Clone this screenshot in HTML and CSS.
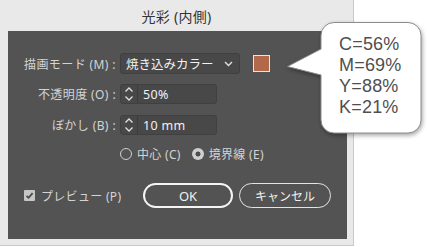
FILE: index.html
```html
<!DOCTYPE html>
<html lang="ja">
<head>
<meta charset="utf-8">
<link rel="stylesheet" href="styles.css">
</head>
<body>
<div class="window">
  <div class="titlebar">光彩 (内側)</div>
  <div class="panel">
    <div class="row r1">
      <div class="label">描画モード (M) :</div>
      <div class="select">
        <span>焼き込みカラー</span>
        <svg class="chev" width="9" height="6" viewBox="0 0 9 6"><path d="M1 1 L4.5 4.5 L8 1" fill="none" stroke="#e0e0e0" stroke-width="1.4"/></svg>
      </div>
      <div class="swatch"></div>
    </div>
    <div class="row r2">
      <div class="label">不透明度 (O) :</div>
      <div class="spin">
        <div class="arrows">
          <svg width="10" height="16" viewBox="0 0 10 16"><path d="M1.5 5.5 L5 2 L8.5 5.5 M1.5 10.5 L5 14 L8.5 10.5" fill="none" stroke="#e0e0e0" stroke-width="1.3"/></svg>
        </div>
        <span class="val">50%</span>
      </div>
    </div>
    <div class="row r3">
      <div class="label">ぼかし (B) :</div>
      <div class="spin">
        <div class="arrows">
          <svg width="10" height="16" viewBox="0 0 10 16"><path d="M1.5 5.5 L5 2 L8.5 5.5 M1.5 10.5 L5 14 L8.5 10.5" fill="none" stroke="#e0e0e0" stroke-width="1.3"/></svg>
        </div>
        <span class="val">10 mm</span>
      </div>
    </div>
    <div class="row radios">
      <div class="radio"><span class="circle"></span><span>中心 (C)</span></div>
      <div class="radio on"><span class="circle"></span><span>境界線 (E)</span></div>
    </div>
    <div class="row buttons">
      <div class="check">
        <span class="box"><svg width="11" height="11" viewBox="0 0 11 11"><path d="M2.5 5.8 L4.6 7.8 L8.6 3.2" fill="none" stroke="#4a4a4a" stroke-width="1.8"/></svg></span>
        <span>プレビュー (P)</span>
      </div>
      <div class="btn ok">OK</div>
      <div class="btn cancel">キャンセル</div>
    </div>
  </div>
</div>
<div class="callout">
  <svg class="bubble" width="427" height="247" viewBox="0 0 427 247">
    <path d="M334 22.5 H408 A13 13 0 0 1 421 35.5 V120 A13 13 0 0 1 408 133 H334 A13 13 0 0 1 321 120 V75 L287.5 66.5 L321 49 V35.5 A13 13 0 0 1 334 22.5 Z" fill="#ffffff" stroke="#8c8c8c" stroke-width="1"/>
  </svg>
  <div class="ctext">C=56%<br>M=69%<br>Y=88%<br>K=21%</div>
</div>
</body>
</html>
```
FILE: styles.css
```css
html, body {
  margin: 0;
  padding: 0;
  background: #ffffff;
}
body {
  width: 427px;
  height: 247px;
  overflow: hidden;
  position: relative;
  font-family: "Noto Sans", "Noto Sans CJK JP", sans-serif;
}
.window {
  width: 354px;
  height: 246px;
  box-sizing: border-box;
  background: #e9e9e9;
  border-right: 1px solid #c9c9c9;
  border-bottom: 1px solid #c9c9c9;
  display: flex;
  flex-direction: column;
}
.titlebar {
  height: 31px;
  line-height: 33px;
  text-align: center;
  font-size: 14px;
  letter-spacing: 0.3px;
  color: #333333;
}
.panel {
  margin: 0 6px 0 8px;
  height: 208px;
  background: #535353;
  box-sizing: border-box;
  padding-top: 22px;
  display: flex;
  flex-direction: column;
  font-size: 12px;
  color: #d4d4d4;
}
.row {
  display: flex;
  align-items: center;
}
.label {
  width: 108px;
  text-align: right;
  white-space: nowrap;
  margin-right: 4px;
  letter-spacing: 0.4px;
}
.r1 { height: 21px; }
.r2 { height: 20px; margin-top: 10px; }
.r3 { height: 20px; margin-top: 11px; }
.select {
  width: 120px;
  height: 21px;
  box-sizing: border-box;
  background: #484848;
  border: 1px solid #404040;
  border-radius: 3px;
  display: flex;
  align-items: center;
  justify-content: space-between;
  padding: 0 6px 0 5px;
  color: #f2f2f2;
  font-size: 12.5px;
}
.chev { margin-top: 1px; }
.swatch {
  width: 17px;
  height: 17px;
  box-sizing: border-box;
  margin-left: 13px;
  background: #b1694a;
  border: 1px solid #e6e6e6;
}
.spin {
  width: 97px;
  height: 20px;
  box-sizing: border-box;
  background: #484848;
  border: 1px solid #404040;
  border-radius: 3px;
  display: flex;
  align-items: center;
  color: #f2f2f2;
  font-size: 12.5px;
}
.arrows {
  width: 17px;
  height: 100%;
  box-sizing: border-box;
  border-right: 1px solid #3c3c3c;
  display: flex;
  align-items: center;
  justify-content: center;
}
.val { margin-left: 5px; letter-spacing: 0.3px; }
.radios {
  height: 18px;
  margin-top: 10px;
  padding-left: 112px;
  letter-spacing: 0.3px;
}
.radio {
  display: flex;
  align-items: center;
  margin-right: 11px;
  white-space: nowrap;
}
.circle {
  width: 12px;
  height: 12px;
  box-sizing: border-box;
  border-radius: 50%;
  border: 1.3px solid #cfcfcf;
  margin-right: 5px;
}
.radio.on .circle {
  background: radial-gradient(circle, #4e4e4e 0 2.2px, #cfcfcf 2.8px);
  border: none;
}
.buttons {
  height: 25px;
  margin-top: 20px;
  padding-left: 16px;
}
.check {
  display: flex;
  align-items: center;
  width: 119px;
  white-space: nowrap;
  letter-spacing: 0.3px;
}
.check .box {
  width: 11px;
  height: 11px;
  background: #c6c6c6;
  border-radius: 1px;
  margin-right: 6px;
  display: flex;
}
.btn {
  height: 25px;
  box-sizing: border-box;
  border-radius: 13px;
  display: flex;
  align-items: center;
  justify-content: center;
  color: #f0f0f0;
}
.ok {
  width: 90px;
  border: 2px solid #f4f4f4;
  font-size: 13px;
}
.cancel {
  width: 92px;
  margin-left: 6px;
  border: 1.3px solid #e4e4e4;
}
.callout {
  position: absolute;
  left: 0;
  top: 0;
  width: 427px;
  height: 247px;
  pointer-events: none;
}
.bubble {
  position: absolute;
  left: 0;
  top: 0;
  filter: drop-shadow(1px 2px 2px rgba(0, 0, 0, 0.35));
}
.ctext {
  position: absolute;
  left: 339px;
  top: 34px;
  font-family: "Liberation Sans", Arial, sans-serif;
  font-size: 18px;
  line-height: 21px;
  color: #4f4f4f;
  letter-spacing: 0.2px;
}
```
